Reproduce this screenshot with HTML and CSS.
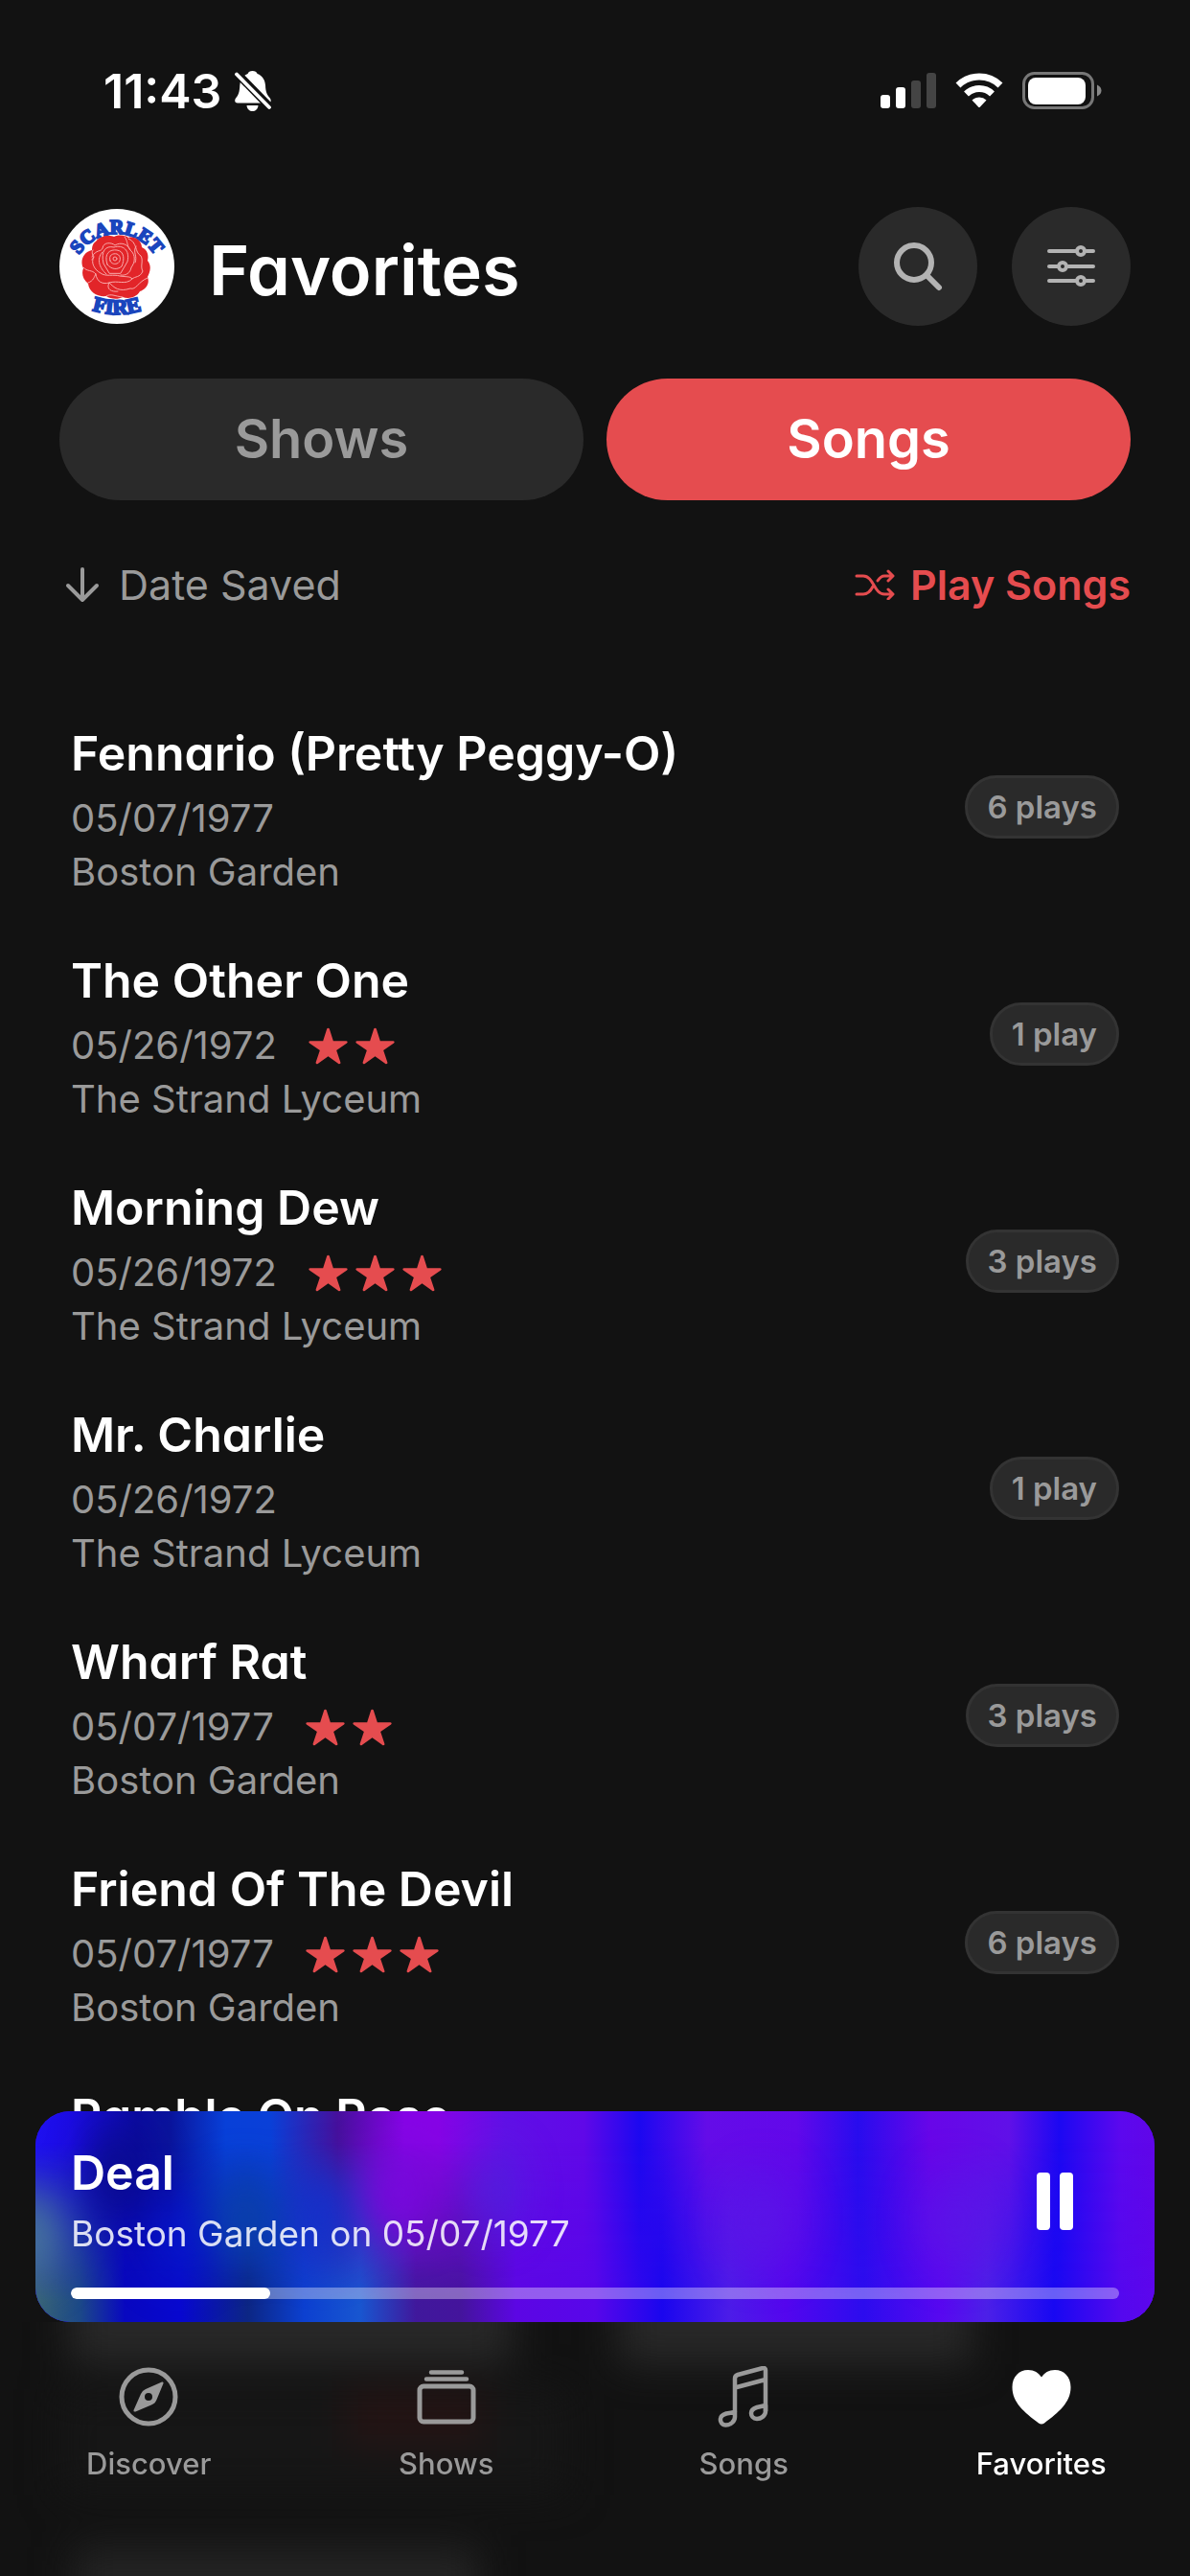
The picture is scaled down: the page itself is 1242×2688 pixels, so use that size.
FILE: index.html
```html
<!DOCTYPE html>
<html lang="en">
<head>
    <meta charset="UTF-8">
    <meta name="viewport" content="width=device-width, initial-scale=1.0">
    <title>Scarlet Fire - Favorites</title>
    <link rel="stylesheet" href="styles.css">
</head>
<body>
    <!-- Shared icons -->
    <svg class="sprite" width="0" height="0" aria-hidden="true">
        <symbol id="star" viewBox="0 0 512 512">
            <path d="M394 480a16 16 0 01-9.39-3L256 383.76 127.39 477a16 16 0 01-24.55-18.08L153 310.35 23 221.2a16 16 0 019-29.2h160.38l48.4-148.95a16 16 0 0130.44 0l48.4 149H480a16 16 0 019.05 29.2L359 310.35l50.13 148.53A16 16 0 01394 480z"/>
        </symbol>
    </svg>

    <div class="app">
        <div class="status-bar">
            <div class="status-left">
                <span class="clock">11:43</span>
                <svg class="bell" viewBox="0 0 39 43" aria-hidden="true">
                    <path d="M18.500 0C21 0 23 1.200 23.600 3C29 5 31.500 9.500 32 15C32.300 22 33.500 24.500 36.500 28C38.500 30.500 38 33.500 35 33.500H3C0 33.500-.5 31 1 28.500C4 25 5 22 5.300 15C5.600 9.500 8.500 5 13.500 3C14.200 1.200 16 0 18.500 0Z" fill="#fff"/>
                    <path d="M12.500 36H24.500C24 40 21.500 42 18.500 42S13 40 12.500 36Z" fill="#fff"/>
                    <path d="M0 0L37 38" stroke="#121212" stroke-width="8.500"/>
                    <path d="M2 3.500L36 38" stroke="#fff" stroke-width="3.800" stroke-linecap="round"/>
                </svg>
            </div>
            <div class="status-right">
                <svg class="signal" viewBox="0 0 58 38" aria-hidden="true">
                    <rect x="0" y="23" width="10" height="14" rx="3" fill="#fff"/>
                    <rect x="16" y="15" width="10" height="22" rx="3" fill="#fff"/>
                    <rect x="32" y="8" width="10" height="29" rx="3" fill="#444"/>
                    <rect x="48" y="0" width="10" height="37" rx="3" fill="#444"/>
                </svg>
                <svg class="wifi" viewBox="0 0 50 38" aria-hidden="true">
                    <path d="M3 13A31.500 31.500 0 0147 13" fill="none" stroke="#fff" stroke-width="7"/>
                    <path d="M11.500 22A19.500 19.500 0 0138.500 22" fill="none" stroke="#fff" stroke-width="7"/>
                    <path d="M17.500 28.500A11 11 0 0132.500 28.500L26 35.500Q25 36.500 24 35.500Z" fill="#fff"/>
                </svg>
                <svg class="battery" viewBox="0 0 83 40" aria-hidden="true">
                    <rect x="1.500" y="1.500" width="72" height="36" rx="11" fill="none" stroke="#777" stroke-width="3"/>
                    <rect x="6" y="6" width="60" height="28" rx="8" fill="#fff"/>
                    <path d="M78 13.500C84 16 84 23 78 25.500Z" fill="#888"/>
                </svg>
            </div>
        </div>

        <header class="header">
            <svg class="logo" viewBox="0 0 120 120" role="img" aria-label="Scarlet Fire">
                <defs>
                    <path id="arcTop" d="M14 72A46 46 0 01106 72"/>
                    <path id="arcBottom" d="M24 102Q60 118 96 102"/>
                </defs>
                <circle cx="60" cy="60" r="60" fill="#fff"/>
                <g class="logo-text">
                    <text font-size="20"><textPath href="#arcTop" startOffset="50%" text-anchor="middle">SCARLET</textPath></text>
                    <text font-size="22"><textPath href="#arcBottom" startOffset="50%" text-anchor="middle">FIRE</textPath></text>
                </g>
                <path d="M38 34C42 28 52 27 57 29C63 26 70 28 72 30C79 28 86 34 86 40C93 43 93 50 92 54C97 60 94 67 92 71C95 79 89 84 84 86C80 93 72 94 66 92C61 95 53 94 49 91C40 92 31 87 30 78C24 73 23 67 25 62C21 54 25 45 34 43C34 39 35 36 38 34Z" fill="#e22529"/>
                <g fill="none" stroke="#f9a9a9" stroke-width="1" stroke-linecap="round" stroke-linejoin="round">
                    <circle cx="58" cy="52" r="2"/>
                    <path d="M53 54C51 48 56 46 60 47C65 49 64 56 60 57C57 58 54 57 53 54Z"/>
                    <path d="M50 58C46 46 53 42 60 43C68 44 68 53 65 60C60 64 54 63 50 58Z"/>
                    <path d="M52 67L46 57C43 44 48 38 57 40C66 37 74 43 71 55L64 67Z"/>
                    <path d="M34 50C38 42 44 45 45 41C46 34 55 35 58 38C64 34 72 37 74 43C80 48 79 56 75 61C74 67 69 70 64 69"/>
                    <path d="M36 50C32 56 37 64 43 67C48 71 57 68 63 70C68 71 74 70 76 73C69 80 61 74 52 77"/>
                    <path d="M45 45C38 52 42 62 49 68M68 29C72 34 70 39 74 43M72 31C82 35 78 45 85 49C88 54 84 60 87 65C84 72 79 70 76 73"/>
                    <path d="M25 61C29 66 34 63 38 68C39 76 45 79 52 77C57 82 62 87 74 83C80 85 82 76 92 72M30 77C36 75 36 71 38 68M49 91C54 88 57 91 66 92M52 77C48 84 55 87 61 86M35 43C32 48 38 48 34 53M80 39C76 45 82 49 79 56"/>
                </g>
            </svg>
            <h1 class="page-title">Favorites</h1>
            <button type="button" class="round-btn" aria-label="Search">
                <svg viewBox="0 0 52 52" width="52" height="52" fill="none" stroke="#b3b3b3" stroke-linecap="round">
                    <circle cx="22" cy="22" r="18" stroke-width="6"/>
                    <path d="M35 35L48 48" stroke-width="6"/>
                </svg>
            </button>
            <button type="button" class="round-btn" aria-label="Filters">
                <svg viewBox="0 0 52 52" width="52" height="52" fill="none" stroke="#b3b3b3" stroke-width="4" stroke-linecap="round">
                    <path d="M3 10H32M42 10H49M3 26H13M23 26H49M3 41H32M42 41H49"/>
                    <circle cx="36" cy="10" r="4"/>
                    <circle cx="17" cy="26" r="4"/>
                    <circle cx="36" cy="41" r="4"/>
                </svg>
            </button>
        </header>

        <div class="tabs">
            <button type="button" class="tab">Shows</button>
            <button type="button" class="tab active">Songs</button>
        </div>

        <div class="toolbar">
            <button type="button" class="sort-btn">
                <svg viewBox="0 0 36 38" width="36" height="38" fill="none" stroke="#9a9a9a" stroke-width="4" stroke-linecap="round" stroke-linejoin="round">
                    <path d="M18 3V35M3 20L18 35L33 20"/>
                </svg>
                Date Saved
            </button>
            <button type="button" class="play-btn">
                <svg viewBox="0 0 42 32" width="42" height="32" fill="none" stroke="#e54c4f" stroke-width="3" stroke-linecap="round" stroke-linejoin="round">
                    <path d="M2 7H9C20 7 20 26 31 26H39M2 26H9C14 26 17 22 19 18M24 12C26 9 28 7 31 7H39M35 2L40 7L35 12M35 21L40 26L35 31"/>
                </svg>
                Play Songs
            </button>
        </div>

        <ul class="song-list">
            <li class="song">
                <div class="song-info">
                    <h2 class="song-title">Fennario (Pretty Peggy-O)</h2>
                    <div class="song-meta">05/07/1977</div>
                    <div class="song-meta">Boston Garden</div>
                </div>
                <span class="plays">6 plays</span>
            </li>
            <li class="song">
                <div class="song-info">
                    <h2 class="song-title">The Other One</h2>
                    <div class="song-meta">05/26/1972
                        <span class="stars" role="img" aria-label="2 stars"><svg><use href="#star"/></svg><svg><use href="#star"/></svg></span>
                    </div>
                    <div class="song-meta">The Strand Lyceum</div>
                </div>
                <span class="plays">1 play</span>
            </li>
            <li class="song">
                <div class="song-info">
                    <h2 class="song-title">Morning Dew</h2>
                    <div class="song-meta">05/26/1972
                        <span class="stars" role="img" aria-label="3 stars"><svg><use href="#star"/></svg><svg><use href="#star"/></svg><svg><use href="#star"/></svg></span>
                    </div>
                    <div class="song-meta">The Strand Lyceum</div>
                </div>
                <span class="plays">3 plays</span>
            </li>
            <li class="song">
                <div class="song-info">
                    <h2 class="song-title">Mr. Charlie</h2>
                    <div class="song-meta">05/26/1972</div>
                    <div class="song-meta">The Strand Lyceum</div>
                </div>
                <span class="plays">1 play</span>
            </li>
            <li class="song">
                <div class="song-info">
                    <h2 class="song-title">Wharf Rat</h2>
                    <div class="song-meta">05/07/1977
                        <span class="stars" role="img" aria-label="2 stars"><svg><use href="#star"/></svg><svg><use href="#star"/></svg></span>
                    </div>
                    <div class="song-meta">Boston Garden</div>
                </div>
                <span class="plays">3 plays</span>
            </li>
            <li class="song">
                <div class="song-info">
                    <h2 class="song-title">Friend Of The Devil</h2>
                    <div class="song-meta">05/07/1977
                        <span class="stars" role="img" aria-label="3 stars"><svg><use href="#star"/></svg><svg><use href="#star"/></svg><svg><use href="#star"/></svg></span>
                    </div>
                    <div class="song-meta">Boston Garden</div>
                </div>
                <span class="plays">6 plays</span>
            </li>
            <li class="song">
                <div class="song-info">
                    <h2 class="song-title">Ramble On Rose</h2>
                </div>
            </li>
        </ul>

        <div class="bottom">
            <section class="player" aria-label="Now playing">
                <svg class="player-bg" viewBox="0 0 1168 220" preserveAspectRatio="none" aria-hidden="true">
                    <defs>
                        <linearGradient id="bandTop">
                            <stop offset="0" stop-color="#1e10f0"/>
                            <stop offset=".03" stop-color="#1c0ce4"/>
                            <stop offset=".09" stop-color="#0a0aa0"/>
                            <stop offset=".12" stop-color="#0a149c"/>
                            <stop offset=".17" stop-color="#0840d8"/>
                            <stop offset=".21" stop-color="#0a40d8"/>
                            <stop offset=".27" stop-color="#46109c"/>
                            <stop offset=".33" stop-color="#8604e6"/>
                            <stop offset=".36" stop-color="#8604e6"/>
                            <stop offset=".42" stop-color="#6010e6"/>
                            <stop offset=".49" stop-color="#6008e8"/>
                            <stop offset=".54" stop-color="#1c08f0"/>
                            <stop offset=".6" stop-color="#640ce8"/>
                            <stop offset=".68" stop-color="#6208ea"/>
                            <stop offset=".735" stop-color="#280cee"/>
                            <stop offset=".8" stop-color="#6806e8"/>
                            <stop offset=".87" stop-color="#6010e8"/>
                            <stop offset=".915" stop-color="#1c08f2"/>
                            <stop offset=".97" stop-color="#5c08ee"/>
                            <stop offset="1" stop-color="#6006e8"/>
                        </linearGradient>
                        <linearGradient id="bandBottom">
                            <stop offset="0" stop-color="#386474"/>
                            <stop offset=".04" stop-color="#1c4888"/>
                            <stop offset=".08" stop-color="#0808c0"/>
                            <stop offset=".13" stop-color="#0808d0"/>
                            <stop offset=".19" stop-color="#0c2684"/>
                            <stop offset=".24" stop-color="#0c40d0"/>
                            <stop offset=".29" stop-color="#1856d0"/>
                            <stop offset=".34" stop-color="#40189c"/>
                            <stop offset=".38" stop-color="#44149c"/>
                            <stop offset=".43" stop-color="#5c06e4"/>
                            <stop offset=".5" stop-color="#5806ea"/>
                            <stop offset=".56" stop-color="#1a06ee"/>
                            <stop offset=".62" stop-color="#4c1ce8"/>
                            <stop offset=".67" stop-color="#5406ee"/>
                            <stop offset=".74" stop-color="#2c0cee"/>
                            <stop offset=".81" stop-color="#5808f0"/>
                            <stop offset=".85" stop-color="#4c20e8"/>
                            <stop offset=".91" stop-color="#1808f2"/>
                            <stop offset=".97" stop-color="#5408ee"/>
                            <stop offset="1" stop-color="#5c06ec"/>
                        </linearGradient>
                        <linearGradient id="fade" x1="0" y1="0" x2="0" y2="1">
                            <stop offset=".15" stop-color="#000"/>
                            <stop offset=".9" stop-color="#fff"/>
                        </linearGradient>
                        <mask id="fadeMask"><rect width="1168" height="220" fill="url(#fade)"/></mask>
                        <filter id="soft" x="-20%" y="-100%" width="140%" height="300%" color-interpolation-filters="sRGB"><feGaussianBlur stdDeviation="22"/></filter>
                    </defs>
                    <rect width="1168" height="220" fill="url(#bandTop)"/>
                    <rect width="1168" height="220" fill="url(#bandBottom)" mask="url(#fadeMask)"/>
                    <g filter="url(#soft)">
                        <ellipse cx="-6" cy="130" rx="30" ry="46" fill="#48789c"/>
                        <ellipse cx="85" cy="65" rx="28" ry="50" fill="#0a0c8c"/>
                        <ellipse cx="150" cy="135" rx="24" ry="40" fill="#0616cc"/>
                        <ellipse cx="218" cy="110" rx="34" ry="44" fill="#0a40ac"/>
                        <ellipse cx="300" cy="110" rx="26" ry="50" fill="#1230cc"/>
                        <ellipse cx="380" cy="85" rx="34" ry="46" fill="#7808dc"/>
                        <ellipse cx="480" cy="85" rx="22" ry="44" fill="#4a28dc" opacity=".7"/>
                        <ellipse cx="760" cy="115" rx="34" ry="50" fill="#5a18e6" opacity=".7"/>
                        <ellipse cx="960" cy="115" rx="34" ry="50" fill="#5a18e6" opacity=".7"/>
                    </g>
                </svg>
                <div class="player-row">
                    <div class="player-info">
                        <div class="player-title">Deal</div>
                        <div class="player-sub">Boston Garden on 05/07/1977</div>
                    </div>
                    <button type="button" class="pause-btn" aria-label="Pause">
                        <svg viewBox="0 0 38 60" width="38" height="60" fill="#fff">
                            <rect x="0" y="0" width="14" height="60" rx="4"/>
                            <rect x="24" y="0" width="14" height="60" rx="4"/>
                        </svg>
                    </button>
                </div>
                <progress class="progress" value="19" max="100" aria-label="Song progress"></progress>
            </section>

            <nav class="nav">
                <!-- Soft glow of the list behind the bar -->
                <div class="nav-glow"></div>
                <a class="nav-item" href="#discover">
                    <svg viewBox="0 0 64 64" width="64" height="64" fill="none" stroke="#9a9a9a" stroke-width="5">
                        <circle cx="32" cy="32" r="28"/>
                        <path fill="#9a9a9a" stroke="none" fill-rule="evenodd" d="M46 16.500Q48 16 47.500 18L40.500 35Q39 39 35 40.500L18.500 47.500Q16 48 16.500 46L24 29Q25.500 25.500 29 24ZM32 28A4 4 0 1032 36A4 4 0 1032 28Z"/>
                    </svg>
                    Discover
                </a>
                <a class="nav-item" href="#shows">
                    <svg viewBox="0 0 64 64" width="64" height="64" fill="none" stroke="#9a9a9a" stroke-width="5" stroke-linecap="round">
                        <rect x="4" y="21" width="56" height="37" rx="4"/>
                        <path d="M11 13.500H53M16 6.500H48" stroke-width="4.500"/>
                    </svg>
                    Shows
                </a>
                <a class="nav-item" href="#songs">
                    <svg viewBox="0 0 64 64" width="64" height="64" fill="none" stroke="#9a9a9a" stroke-width="4.500" stroke-linejoin="round">
                        <path d="M23 48V13Q23 10 26 9L52 2Q55 1.500 55 4V47M23 22.500L55 14"/>
                        <path d="M23 48V53C23 58 18 61.500 13.500 61.500C9.500 61.500 7.500 58 8 55C8 52 11 50.500 14 49.500Z"/>
                        <path d="M55 41V47C55 52 50 55 46 55C42 55 40 52 40 49C40 46 43 44 46 43Z"/>
                    </svg>
                    Songs
                </a>
                <a class="nav-item active" href="#favorites" aria-current="page">
                    <svg viewBox="0 0 64 64" width="64" height="64" fill="#fff">
                        <path d="M32 60.500Q30.500 60.500 29 59.500C14 48 1.500 38 1.500 22C1.500 11 8.500 4 18 4C24.500 4 29 7 32 11.500C35 7 39.500 4 46 4C55.500 4 62.500 11 62.500 22C62.500 38 50 48 35 59.500Q33.500 60.500 32 60.500Z"/>
                    </svg>
                    Favorites
                </a>
            </nav>
        </div>
    </div>
</body>
</html>
```
FILE: styles.css
```css
* {
    box-sizing: border-box;
}
html, body {
    margin: 0;
    height: 100%;
    background-color: #121212;
    color: #fff;
    font-family: Inter, "Liberation Sans", sans-serif;
}
button {
    border: none;
    background: none;
    padding: 0;
    font-family: inherit;
    cursor: pointer;
}
.sprite {
    position: absolute;
}
.app {
    height: 100vh;
    overflow: hidden;
    padding: 0 62px;
}

/* Status bar */
.status-bar {
    display: flex;
    justify-content: space-between;
    align-items: center;
    height: 190px;
    padding: 0 30px 0 46px;
}
.status-left, .status-right {
    display: flex;
    align-items: center;
}
.status-left {
    gap: 14px;
}
.status-right {
    gap: 20px;
}
.clock {
    font-size: 50px;
    font-weight: 600;
}
.bell {
    width: 39px;
    height: 43px;
}
.signal {
    width: 58px;
    height: 38px;
}
.wifi {
    width: 50px;
    height: 38px;
}
.battery {
    width: 83px;
    height: 40px;
}

/* Header */
.header {
    display: flex;
    align-items: center;
    gap: 36px;
    padding-top: 26px;
}
.logo {
    width: 120px;
    height: 120px;
}
.logo-text {
    font-family: "Liberation Serif", serif;
    font-weight: bold;
    fill: #1a45bd;
    stroke: #1a45bd;
    stroke-width: 2px;
}
.page-title {
    flex: 1;
    margin: 0;
    padding-top: 8px;
    font-size: 72px;
    line-height: 88px;
    font-weight: 600;
    font-feature-settings: "cv11";
}
.round-btn {
    display: flex;
    align-items: center;
    justify-content: center;
    width: 124px;
    height: 124px;
    border-radius: 50%;
    background-color: #2a2a2a;
}

/* Shows / Songs switch */
.tabs {
    display: flex;
    gap: 24px;
    margin-top: 55px;
}
.tab {
    flex: 1;
    height: 127px;
    padding-bottom: 2px;
    border-radius: 64px;
    background-color: #2a2a2a;
    color: #9a9a9a;
    font-size: 56px;
    font-weight: 600;
}
.tab.active {
    background-color: #e54c4f;
    color: #fff;
}

.toolbar {
    display: flex;
    justify-content: space-between;
    align-items: center;
    height: 176px;
    padding-left: 6px;
}
.sort-btn, .play-btn {
    display: flex;
    align-items: center;
    gap: 16px;
    font-size: 43px;
    line-height: 56px;
}
.sort-btn {
    gap: 20px;
    color: #9a9a9a;
}
.play-btn {
    color: #e54c4f;
    font-weight: 600;
}

/* Song list */
.song-list {
    list-style: none;
    margin: 24px 0 0;
    padding: 0 12px;
}
.song {
    display: flex;
    align-items: center;
    justify-content: space-between;
    padding: 24px 0 21px;
}
.song-title {
    margin: 0;
    font-size: 50px;
    line-height: 80px;
    font-weight: 600;
    font-feature-settings: "cv11";
}
.song-meta {
    display: flex;
    align-items: center;
    gap: 32px;
    color: #9a9a9a;
    font-size: 40px;
    line-height: 56px;
}
.stars {
    display: flex;
    gap: 6px;
}
.stars svg {
    width: 43px;
    height: 43px;
    fill: #e54c4f;
}
.plays {
    padding: 10px 20px;
    border: 3px solid #333;
    border-radius: 33px;
    background-color: #2a2a2a;
    color: #9a9a9a;
    font-size: 33px;
    line-height: 40px;
    font-weight: 600;
}

/* Player and navigation stay over the list */
.bottom {
    position: fixed;
    left: 0;
    right: 0;
    bottom: 0;
}
.player {
    position: relative;
    overflow: hidden;
    margin: 0 37px;
    padding: 32px 37px 24px;
    border-radius: 36px;
    background-color: #3010e8;
}
.player-bg {
    position: absolute;
    left: 0;
    top: 0;
    width: 100%;
    height: 100%;
}
.player-row {
    position: relative;
    display: flex;
    align-items: center;
    justify-content: space-between;
    padding-right: 48px;
}
.player-title {
    font-size: 50px;
    line-height: 64px;
    font-weight: 600;
}
.player-sub {
    color: rgba(255, 255, 255, .85);
    font-size: 37px;
    line-height: 64px;
}
.pause-btn {
    padding-bottom: 4px;
}
.pause-btn svg {
    display: block;
}
.progress {
    position: relative;
    display: block;
    width: 100%;
    height: 12px;
    margin-top: 24px;
    border: none;
    border-radius: 6px;
    background-color: rgba(255, 255, 255, .35);
    overflow: hidden;
    appearance: none;
}
.progress::-webkit-progress-bar {
    background: none;
}
.progress::-webkit-progress-value {
    border-radius: 6px;
    background-color: #fff;
}

.nav {
    position: relative;
    display: flex;
    overflow: hidden;
    height: 265px;
    padding-top: 46px;
    background-color: #121212;
}
.nav-glow {
    position: absolute;
    inset: -40px;
    background-image:
        linear-gradient(#282828, #282828),
        linear-gradient(#282828, #282828),
        linear-gradient(#241414, #241414),
        linear-gradient(#161616, #161616),
        linear-gradient(#242424, #242424);
    background-size: 35% 84px, 28% 84px, 11% 60px, 40% 110px, 32% 70px;
    background-position: 13% 0, 72% 0, 34% 110px, 13% 110px, 13% 100%;
    background-repeat: no-repeat;
    filter: blur(20px);
}
.nav-item {
    position: relative;
    flex: 1;
    display: flex;
    flex-direction: column;
    align-items: center;
    gap: 18px;
    color: #9a9a9a;
    font-size: 31px;
    line-height: 40px;
    font-weight: 500;
    text-decoration: none;
}
.nav-item.active {
    color: #fff;
}
```
